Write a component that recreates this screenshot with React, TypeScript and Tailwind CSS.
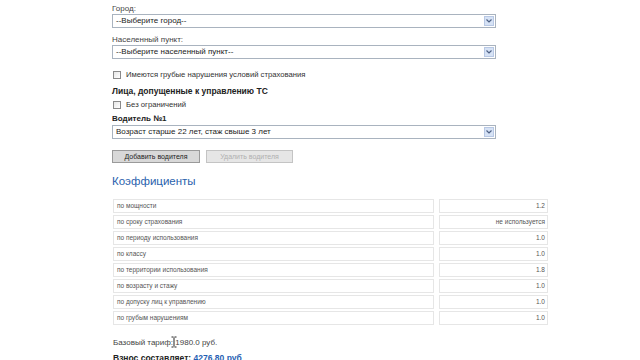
import React from "react";

const font = { fontFamily: '"Liberation Sans", Arial, sans-serif' };

function Select({ text }: { text: string }) {
  return (
    <div className="flex h-[14px] w-[384px] items-stretch border border-[#a9b3bf] bg-white">
      <div className="flex flex-1 items-center pl-[3px] text-[8px] leading-none text-[#222]">{text}</div>
      <div className="m-[1px] flex w-[10px] items-center justify-center border border-[#b8c8e4] bg-[#d6e2f5]">
        <svg width="6" height="4" viewBox="0 0 6 4">
          <path d="M0.5 0.5 L3 3 L5.5 0.5" fill="none" stroke="#4d6185" strokeWidth="1.2" />
        </svg>
      </div>
    </div>
  );
}

function Check({ label }: { label: string }) {
  return (
    <div className="flex h-[10px] items-center gap-[3px] pl-[1px]">
      <div className="h-[8px] w-[8px] border border-[#8a8a8a] bg-gradient-to-br from-[#e6e6e6] to-white" />
      <span className="pl-[2px] text-[7.7px] leading-none text-[#333]">{label}</span>
    </div>
  );
}

const rows: [string, string][] = [
  ["по мощности", "1.2"],
  ["по сроку страхования", "не используется"],
  ["по периоду использования", "1.0"],
  ["по классу", "1.0"],
  ["по территории использования", "1.8"],
  ["по возрасту и стажу", "1.0"],
  ["по допуску лиц к управлению", "1.0"],
  ["по грубым нарушениям", "1.0"],
];

export default function App() {
  return (
    <div className="relative h-[360px] w-[640px] overflow-hidden bg-white" style={font}>
      <div className="flex flex-col pl-[112px]">
        <div className="mt-[3px] h-[11px] text-[8px] leading-[11px] text-[#444]">Город:</div>
        <Select text="--Выберите город--" />
        <div className="mt-[6px] h-[11px] text-[8px] leading-[11px] text-[#444]">Населенный пункт:</div>
        <Select text="--Выберите населенный пункт--" />
        <div className="mt-[11px]">
          <Check label="Имеются грубые нарушения условий страхования" />
        </div>
        <div className="mt-[6px] h-[11px] text-[8.5px] font-bold leading-[11px] text-[#222]">
          Лица, допущенные к управлению ТС
        </div>
        <div className="mt-[3px]">
          <Check label="Без ограничений" />
        </div>
        <div className="mt-[3px] h-[11px] text-[8px] font-bold leading-[11px] text-[#222]">Водитель №1</div>
        <div className="mt-[1px]">
          <Select text="Возраст старше 22 лет, стаж свыше 3 лет" />
        </div>
        <div className="mt-[11px] flex gap-[6px]">
          <div className="flex h-[13px] w-[88px] items-center justify-center border border-[#9a9a9a] bg-[#d8d8d8] text-[7px] leading-none text-[#222]">
            Добавить водителя
          </div>
          <div className="flex h-[13px] w-[87px] items-center justify-center border border-[#c4c4c4] bg-[#e6e6e6] text-[7px] leading-none text-[#b0b0b0]">
            Удалить водителя
          </div>
        </div>
        <div className="mt-[10px] h-[16px] text-[11.5px] leading-[16px] text-[#2a62ad]">Коэффициенты</div>
        <div className="mt-[10px] flex w-[436px] flex-col gap-[2px] pl-[1px]">
          {rows.map(([a, b]) => (
            <div key={a} className="flex h-[14px] gap-[5px]">
              <div className="flex w-[321px] items-center border border-[#e6e6e6] pl-[3px] text-[6.5px] leading-none text-[#555]">
                {a}
              </div>
              <div className="flex w-[109px] items-center justify-end border border-[#e6e6e6] pr-[2px] text-[6.5px] leading-none text-[#555]">
                {b}
              </div>
            </div>
          ))}
        </div>
        <div className="mt-[12px] h-[12px] pl-[1px] text-[8px] leading-[12px] text-[#444]">
          Базовый тариф: 1980.0 руб.
        </div>
        <div className="mt-[3px] h-[12px] pl-[1px] text-[8.5px] font-bold leading-[12px] text-[#222]">
          Взнос составляет: <span className="text-[#1f5fb3]">4276.80 руб</span>
        </div>
      </div>
      <svg className="absolute left-[171px] top-[336px]" width="6" height="12" viewBox="0 0 6 12">
        <path d="M0.5 1 H2.5 M3.5 1 H5.5 M3 1.5 V10.5 M0.5 11 H2.5 M3.5 11 H5.5" stroke="#222" strokeWidth="1" fill="none" />
      </svg>
    </div>
  );
}
